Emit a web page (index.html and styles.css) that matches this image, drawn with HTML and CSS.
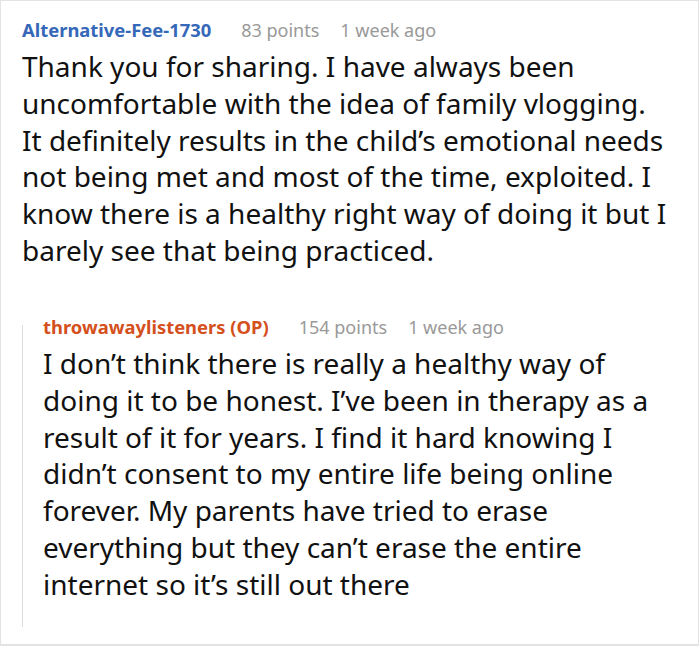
FILE: index.html
```html
<!DOCTYPE html>
<html>
<head>
<meta charset="utf-8">
<link rel="stylesheet" href="styles.css">
</head>
<body>
<div class="thread">
  <div class="comment">
    <div class="meta">
      <span class="author">Alternative-Fee-1730</span>
      <span class="points">83 points</span>
      <span class="time">1 week ago</span>
    </div>
    <p class="body">Thank you for sharing. I have always been uncomfortable with the idea of family vlogging. It definitely results in the child’s emotional needs not being met and most of the time, exploited. I know there is a healthy right way of doing it but I barely see that being practiced.</p>
    <div class="reply">
      <div class="meta">
        <span class="author op">throwawaylisteners (OP)</span>
        <span class="points">154 points</span>
        <span class="time">1 week ago</span>
      </div>
      <p class="body">I don’t think there is really a healthy way of doing it to be honest. I’ve been in therapy as a result of it for years. I find it hard knowing I didn’t consent to my entire life being online forever. My parents have tried to erase everything but they can’t erase the entire internet so it’s still out there</p>
    </div>
  </div>
</div>
</body>
</html>
```

FILE: styles.css
```css
html, body {
  margin: 0;
  padding: 0;
  background: #fff;
}
.thread {
  box-sizing: border-box;
  width: 699px;
  height: 646px;
  border: 1px solid #e3e3e3;
  border-bottom-width: 2px;
  padding: 15.7px 30px 0 21px;
  font-family: "Noto Sans", sans-serif;
  overflow: hidden;
}
.meta {
  display: flex;
  align-items: baseline;
  font-size: 18px;
  line-height: 26px;
  color: #999;
  margin-bottom: 5.5px;
}
.author {
  font-size: 18.4px;
  font-weight: 700;
  color: #3568b8;
  margin-right: 30px;
}
.author.op {
  color: #d4501c;
}
.points {
  margin-right: 21px;
}
.body {
  margin: 0;
  font-size: 28px;
  line-height: 36.75px;
  color: #111;
}
.reply {
  position: relative;
  margin-top: 45px;
  padding: 0 0 25px 21px;
}
.reply::before {
  content: "";
  position: absolute;
  left: 0;
  top: 11px;
  bottom: 0;
  width: 1px;
  background: #dcdcdc;
}
```
